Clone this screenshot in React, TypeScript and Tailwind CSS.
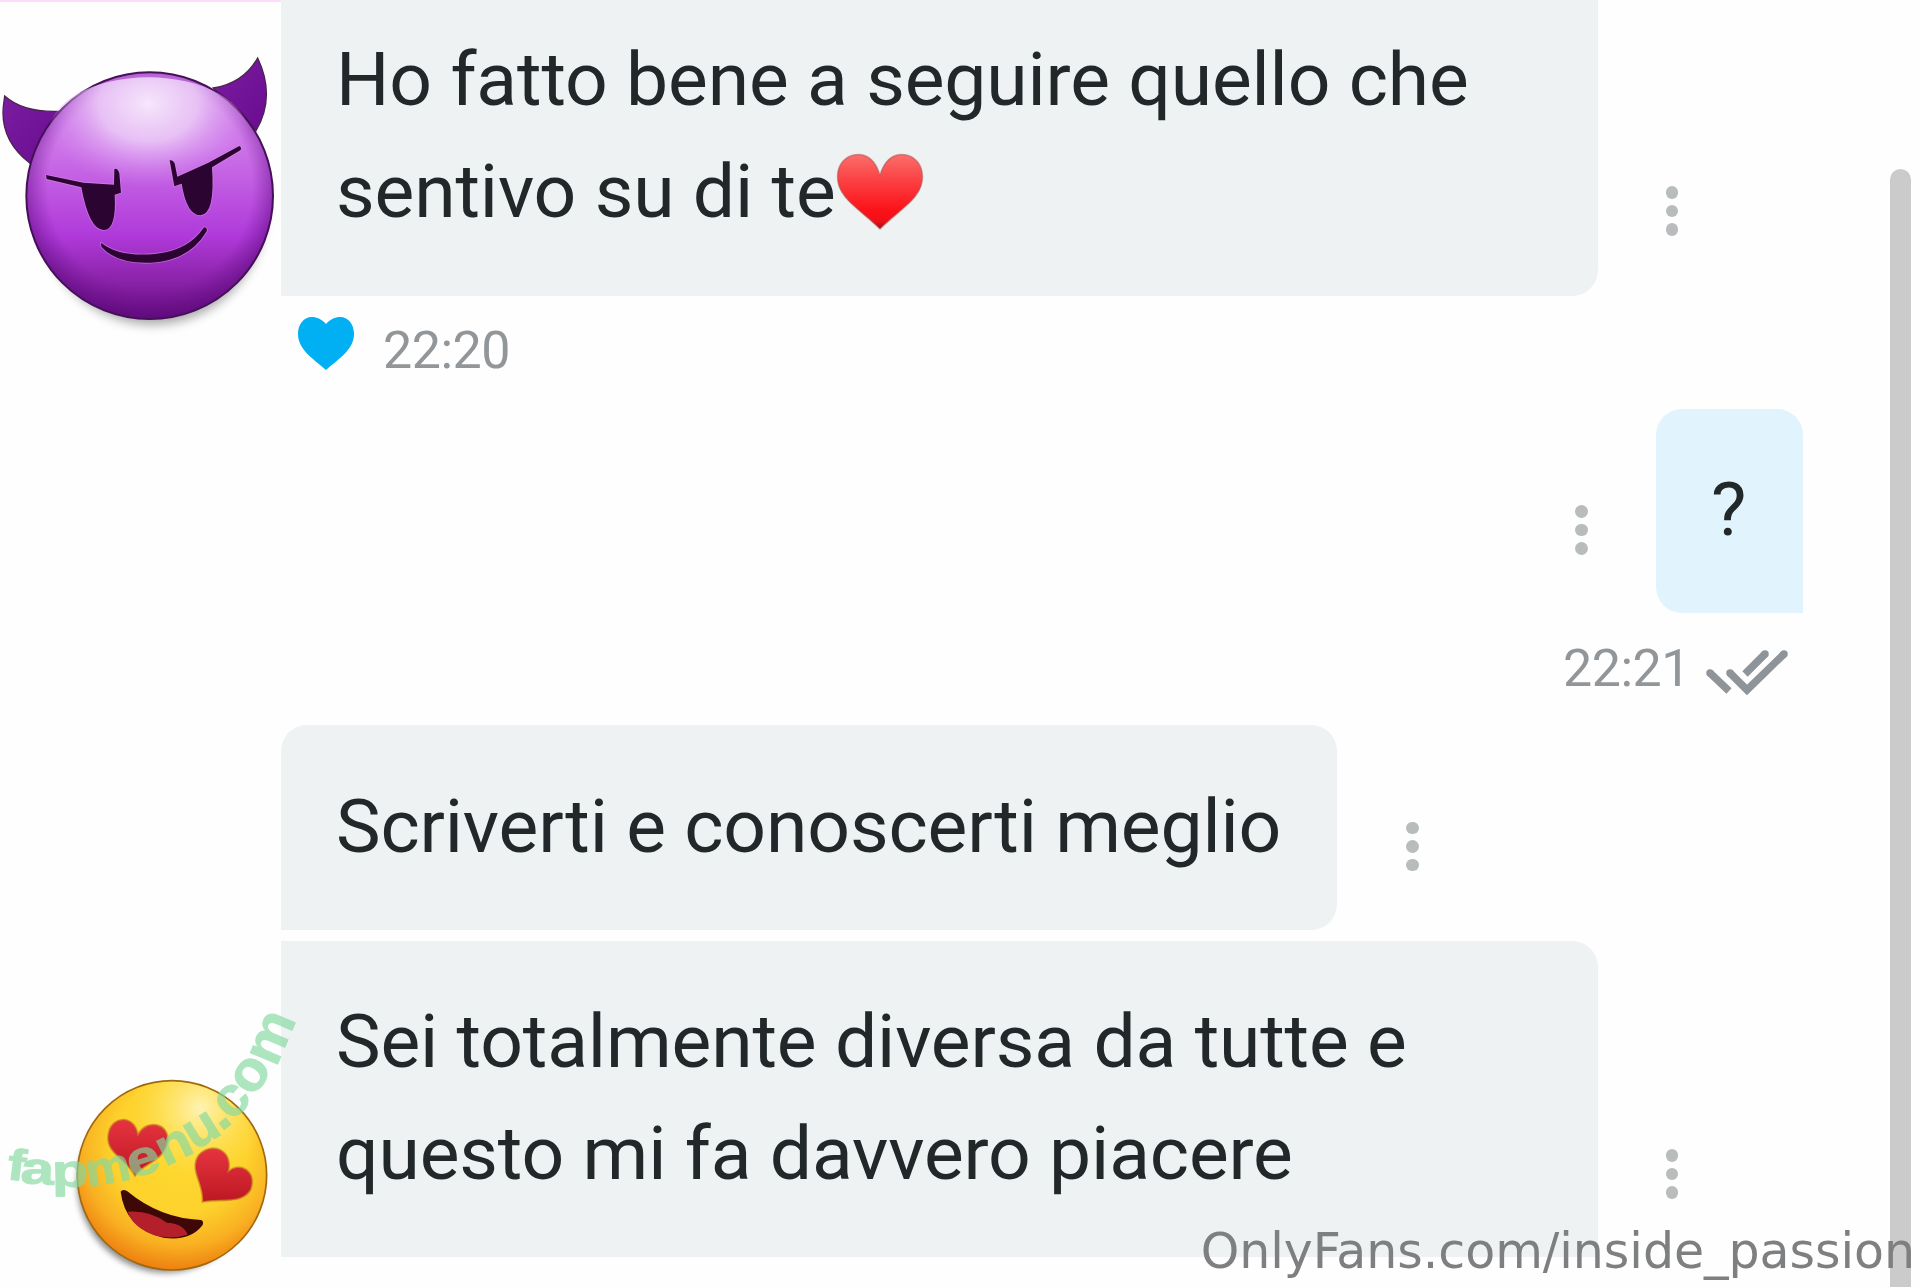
import type { ReactNode } from "react";

function DevilFace() {
  return (
    <svg viewBox="0 0 900 1050" className="h-[350px] w-[300px] shrink-0">
      <defs>
        <linearGradient id="devilBody" x1="0" y1="0" x2="0" y2="1">
          <stop offset="0" stopColor="#cf80ea" />
          <stop offset="0.3" stopColor="#cd74e8" />
          <stop offset="0.66" stopColor="#b03ada" />
          <stop offset="0.85" stopColor="#8a22a8" />
          <stop offset="1" stopColor="#680c80" />
        </linearGradient>
        <radialGradient id="devilShine" cx="445" cy="310" r="330" gradientUnits="userSpaceOnUse" gradientTransform="translate(0 75) scale(1 .76)">
          <stop offset="0" stopColor="#f6e6fb" />
          <stop offset="0.45" stopColor="#eccdf7" stopOpacity="0.85" />
          <stop offset="1" stopColor="#d68cf0" stopOpacity="0" />
        </radialGradient>
        <radialGradient id="devilEdge" cx="450" cy="560" r="392" gradientUnits="userSpaceOnUse">
          <stop offset="0.78" stopColor="#6d1191" stopOpacity="0" />
          <stop offset="1" stopColor="#5c0a7c" stopOpacity="0.65" />
        </radialGradient>
        <linearGradient id="devilHorn" x1="0" y1="0" x2="1" y2="1">
          <stop offset="0" stopColor="#7a1da0" />
          <stop offset="1" stopColor="#6b0c90" />
        </linearGradient>
        <filter id="devilSoft" x="-20%" y="-20%" width="140%" height="140%">
          <feGaussianBlur stdDeviation="16" />
        </filter>
      </defs>
      <ellipse cx="458" cy="636" rx="335" ry="338" fill="#000" opacity="0.34" filter="url(#devilSoft)" />
      <g fill="url(#devilHorn)" stroke="#4a2450" strokeWidth="4">
        <path d="M14 288 Q70 338 178 334 L90 490 Q0 420 10 320Z" />
        <path d="M640 264 Q730 250 773 174 Q828 290 768 392Z" />
      </g>
      <circle cx="449" cy="587" r="370" fill="url(#devilBody)" />
      <circle cx="449" cy="587" r="370" fill="url(#devilEdge)" stroke="#451058" strokeWidth="6" />
      <ellipse cx="445" cy="400" rx="300" ry="168" fill="url(#devilShine)" />
      <g fill="#2c0432" stroke="#d78fea" strokeOpacity="0.55" strokeWidth="5" strokeLinejoin="round" paintOrder="stroke">
        <path d="M138 525 L250 548 L342 554 L343 508 Q352 502 358 520 L363 578 L344 584 Q350 688 312 690 Q268 692 244 562 L140 537Z" />
        <path d="M509 481 Q518 478 524 490 L532 530 L625 488 L718 438 Q727 443 721 451 L636 502 Q646 642 602 646 Q560 646 545 551 L523 559Z" />
        <path d="M303 728 Q360 773 470 761 Q565 752 612 682 Q623 682 620 694 Q570 781 455 788 Q350 793 304 740Z" />
      </g>
    </svg>
  );
}

function LoveFace() {
  return (
    <svg viewBox="0 0 960 921" className="h-[307px] w-[320px] shrink-0">
      <defs>
        <radialGradient id="loveBody" cx="540" cy="500" r="370" gradientUnits="userSpaceOnUse">
          <stop offset="0" stopColor="#fed92f" />
          <stop offset="0.55" stopColor="#fdd22c" />
          <stop offset="0.8" stopColor="#f9b022" />
          <stop offset="1" stopColor="#ee8110" />
        </radialGradient>
        <radialGradient id="loveShine" cx="600" cy="385" r="210" gradientUnits="userSpaceOnUse">
          <stop offset="0" stopColor="#fff3b4" />
          <stop offset="1" stopColor="#fee560" stopOpacity="0" />
        </radialGradient>
        <linearGradient id="loveHeart" x1="0" y1="0" x2="0" y2="1">
          <stop offset="0" stopColor="#e63440" />
          <stop offset="1" stopColor="#bd1823" />
        </linearGradient>
        <filter id="loveSoft" x="-20%" y="-20%" width="140%" height="140%">
          <feGaussianBlur stdDeviation="10" />
        </filter>
      </defs>
      <ellipse cx="496" cy="610" rx="264" ry="268" fill="#000" opacity="0.45" filter="url(#loveSoft)" />
      <circle cx="516" cy="586" r="284" fill="url(#loveBody)" />
      <circle cx="516" cy="586" r="284" fill="url(#loveShine)" stroke="#a0690e" strokeWidth="5" />
      <g fill="url(#loveHeart)" stroke="#c98b1c" strokeOpacity="0.7" strokeWidth="5">
        <path d="M414 463 C404 405 340 405 326 455 C310 520 375 530 405 588 C435 545 495 545 503 480 C507 430 440 415 414 463Z" />
        <path d="M686 573 C700 505 630 485 596 525 C565 570 612 610 607 666 C660 655 725 675 752 630 C775 570 715 545 686 573Z" />
      </g>
      <path d="M362 635 Q368 626 382 634 Q480 715 602 720 Q612 722 608 735 Q570 785 490 773 Q375 745 362 635Z" fill="#3d0805" />
      <path d="M383 695 Q450 690 500 728 Q550 730 563 764 Q520 778 470 768 Q400 745 383 695Z" fill="#b3202b" />
    </svg>
  );
}

const arcLetters = [
  { ch: "f", x: 6, y: 1179, angle: 7, size: 44, stretch: 1.25 },
  { ch: "a", x: 20, y: 1183, angle: 3, size: 45, stretch: 1.34 },
  { ch: "p", x: 52, y: 1187, angle: -1, size: 46, stretch: 1.3 },
  { ch: "m", x: 88, y: 1187, angle: -10, size: 47, stretch: 1.08 },
  { ch: "e", x: 132, y: 1179, angle: -18, size: 49, stretch: 1.2 },
  { ch: "n", x: 165, y: 1167, angle: -26, size: 51, stretch: 1.12 },
  { ch: "u", x: 195, y: 1151, angle: -32, size: 52, stretch: 1.06 },
  { ch: ".", x: 221, y: 1132, angle: -38, size: 54, stretch: 1.1 },
  { ch: "c", x: 232, y: 1122, angle: -46, size: 55, stretch: 1.02 },
  { ch: "o", x: 253, y: 1098, angle: -55, size: 56, stretch: 1.04 },
  { ch: "m", x: 276, y: 1068, angle: -67, size: 56, stretch: 1.06 },
];

function ArcMark() {
  return (
    <svg viewBox="0 0 320 1287" className="pointer-events-none absolute top-0 left-0 h-[1287px] w-[320px]">
      <g fill="#84d9a0" stroke="#84d9a0" strokeWidth="1" opacity="0.66" fontWeight="700" className="font-['Liberation_Sans',sans-serif]">
        {arcLetters.map((l, i) => (
          <text key={i} fontSize={l.size} transform={`translate(${l.x} ${l.y}) rotate(${l.angle}) scale(${l.stretch} 1)`}>
            {l.ch}
          </text>
        ))}
      </g>
    </svg>
  );
}

function Dots({ className }: { className: string }) {
  return (
    <div className={`flex shrink-0 flex-col gap-[6px] ${className}`}>
      <span className="size-[12.6px] rounded-full bg-[#b9bcbc]" />
      <span className="size-[12.6px] rounded-full bg-[#b9bcbc]" />
      <span className="size-[12.6px] rounded-full bg-[#b9bcbc]" />
    </div>
  );
}

function Bubble({ className, children }: { className: string; children: ReactNode }) {
  return (
    <div className={`shrink-0 text-[75px] leading-[112px] tracking-[-0.15px] whitespace-nowrap text-[#22282a] ${className}`}>
      {children}
    </div>
  );
}

function RedHeart() {
  return (
    <svg viewBox="0 0 88 78" className="mt-[18px] h-[78px] w-[88px] shrink-0">
      <defs>
        <linearGradient id="redHeart" x1="0" y1="0" x2="0" y2="1">
          <stop offset="0" stopColor="#fb6e6c" />
          <stop offset="0.35" stopColor="#fb4143" />
          <stop offset="0.75" stopColor="#fb1219" />
          <stop offset="0.9" stopColor="#ee1016" />
          <stop offset="1" stopColor="#a50a10" />
        </linearGradient>
      </defs>
      <path d="M44 22 C39 6 31 1.5 22 1.5 C10 1.5 1.5 11 1.5 24 C1.5 45 24 56 44 76 C64 56 86.5 45 86.5 24 C86.5 11 78 1.5 66 1.5 C57 1.5 49 6 44 22Z" fill="url(#redHeart)" stroke="#a55" strokeOpacity="0.5" strokeWidth="1.5" />
    </svg>
  );
}

export default function App() {
  return (
    <main className="relative flex h-[1287px] w-[1920px] overflow-hidden bg-[#fefefe] font-[Roboto,sans-serif]">
      <div className="flex w-[1890px] shrink-0 flex-col">
        <section className="flex h-[296px] shrink-0">
          <div className="w-[281px] shrink-0 border-t-2 border-[#fbdcfa]">
            <div className="-mt-[2px] flex">
              <DevilFace />
            </div>
          </div>
          <Bubble className="relative w-[1317px] rounded-br-[26px] bg-[#eef2f3] pt-[23px] pl-[55px]">
            <p>Ho fatto bene a seguire quello che</p>
            <div className="flex">
              <span>sentivo su di te</span>
              <RedHeart />
            </div>
          </Bubble>
          <Dots className="mt-[186px] ml-[67.5px]" />
        </section>

        <div className="flex h-[113px] shrink-0 pl-[298px]">
          <svg viewBox="0 0 56 53" className="mt-[21px] h-[53px] w-[56px]">
            <path d="M28 7 C23 1 17 0 14 0 C5 0 0 8 0 17 C0 32 14 41 28 53 C42 41 56 32 56 17 C56 8 51 0 42 0 C39 0 33 1 28 7Z" fill="#00b0f2" />
          </svg>
          <span className="mt-[19px] ml-[29px] text-[52px] leading-[72px] tracking-[-0.5px] text-[#929699]">22:20</span>
        </div>

        <section className="flex h-[203.5px] shrink-0 justify-end pr-[87px]">
          <Dots className="mt-[96px] mr-[68px]" />
          <Bubble className="w-[147px] rounded-[26px] rounded-br-none bg-[#e1f4fd] pt-[44px] pl-[55px]">?</Bubble>
        </section>

        <div className="flex h-[112.5px] shrink-0 justify-end pr-[101px]">
          <span className="mt-[20.5px] mr-[15px] text-[52px] leading-[72px] tracking-[-0.5px] text-[#929699]">22:21</span>
          <svg viewBox="0 0 84 50" className="mt-[34.5px] h-[50px] w-[84px]" fill="none" stroke="#8f9499" strokeWidth="7.5">
            <path d="M5 26 L24 44 M25 26 L42 43 L79 7 M40 27 L60 7" strokeLinejoin="miter" />
            <path d="M5 26 h.01 M25 26 h.01 M79 7 h.01 M60 7 h.01" strokeLinecap="round" />
          </svg>
        </div>

        <section className="flex h-[205px] shrink-0 pl-[281px]">
          <Bubble className="w-[1056px] rounded-t-[26px] rounded-br-[26px] bg-[#eef2f3] pt-[45px] pl-[55px]">
            Scriverti e conoscerti meglio
          </Bubble>
          <Dots className="mt-[96.5px] ml-[69px]" />
        </section>

        <section className="mt-[11px] flex h-[316px] shrink-0">
          <div className="flex w-[281px] shrink-0 pt-[39px]">
            <LoveFace />
          </div>
          <Bubble className="relative w-[1317px] rounded-tr-[26px] bg-[#eef2f3] pt-[44px] pl-[55px]">
            <p>Sei totalmente diversa da tutte e</p>
            <p>questo mi fa davvero piacere</p>
          </Bubble>
          <Dots className="mt-[208px] ml-[67.5px]" />
        </section>
      </div>

      <div className="mt-[169px] w-[21px] shrink-0 rounded-t-full bg-[#cbcbcb]" />

      <ArcMark />
      <p className="absolute right-[5px] bottom-0 text-[49px] leading-[70px] tracking-[-0.05px] whitespace-nowrap text-[#7d7f80] font-['DejaVu_Sans',sans-serif]">
        OnlyFans.com/inside_passion
      </p>
    </main>
  );
}
